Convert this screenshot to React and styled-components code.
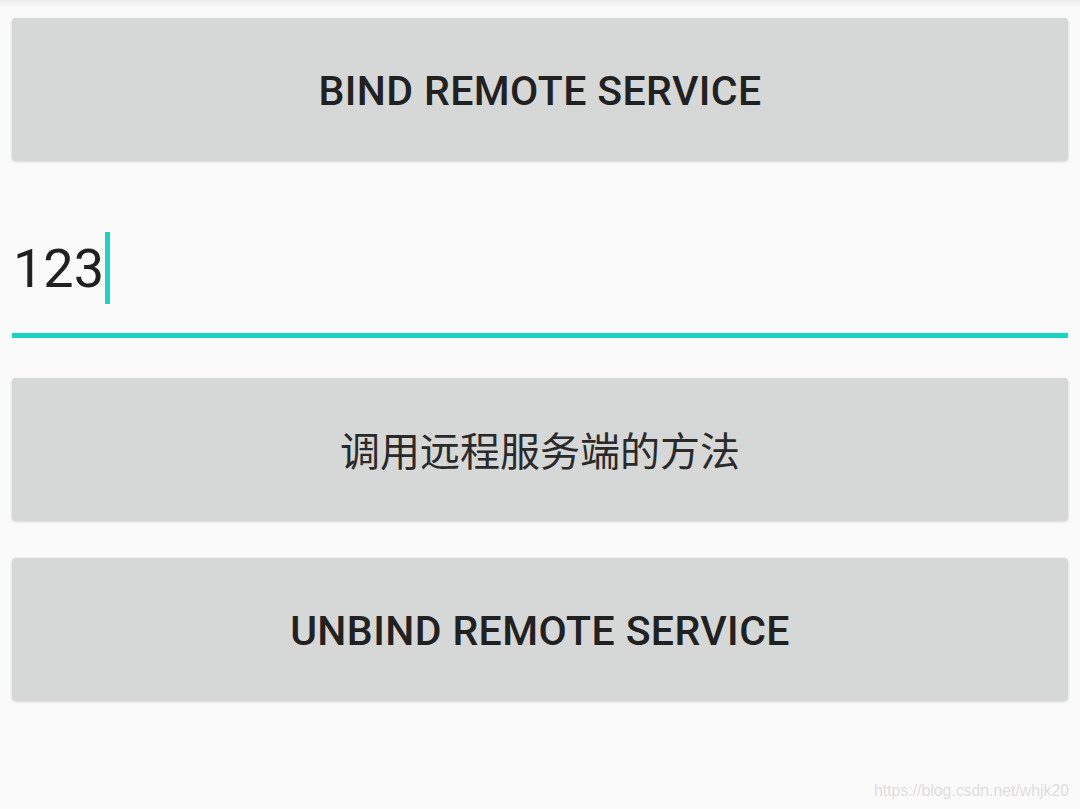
import React from 'react';
import styled, { createGlobalStyle } from 'styled-components';

const GlobalStyle = createGlobalStyle`
  html, body {
    margin: 0;
    padding: 0;
    background: #fafafa;
  }
  body {
    font-family: Roboto, "Noto Sans CJK SC", sans-serif;
  }
`;

const Screen = styled.div`
  position: relative;
  width: 1080px;
  height: 809px;
  overflow: hidden;
  background: #fafafa;
  box-sizing: border-box;
  padding: 18px 12px 0;
  display: flex;
  flex-direction: column;
`;

const TopShade = styled.div`
  position: absolute;
  top: 0;
  left: 0;
  right: 0;
  height: 7px;
  background: linear-gradient(to bottom, rgba(0, 0, 0, 0.06), rgba(0, 0, 0, 0));
`;

const Button = styled.button`
  display: flex;
  align-items: center;
  justify-content: center;
  height: 142px;
  width: 100%;
  margin-top: ${(p) => p.$gap}px;
  border: none;
  border-radius: 4px;
  background: #d6d7d7;
  box-shadow: 0 2px 3px rgba(0, 0, 0, 0.14), 0 0 2px rgba(0, 0, 0, 0.08);
  color: ${(p) => (p.$cjk ? '#2a2a2a' : '#212121')};
  font-family: Roboto, "Noto Sans CJK SC", sans-serif;
  font-size: ${(p) => (p.$cjk ? '40px' : '41px')};
  font-weight: ${(p) => (p.$cjk ? 400 : 500)};
  letter-spacing: ${(p) => (p.$cjk ? '0' : '0.4px')};
  padding: ${(p) => (p.$cjk ? '0' : '3px 0 0')};
`;

const Field = styled.div`
  height: 178px;
  display: flex;
  flex-direction: column;
  justify-content: flex-end;
`;

const FieldValue = styled.div`
  display: flex;
  align-items: center;
  height: 72px;
  margin-bottom: 29px;
  padding-left: 1px;
  font-family: Roboto, sans-serif;
  font-size: 54px;
  color: #212121;
`;

const Cursor = styled.span`
  display: inline-block;
  width: 5px;
  height: 72px;
  margin-left: 1px;
  background: #19d3c5;
`;

const Underline = styled.div`
  height: 5px;
  background: #19d3c5;
`;

const Watermark = styled.div`
  position: absolute;
  right: 11px;
  bottom: 9px;
  font-family: "Liberation Sans", Arial, sans-serif;
  font-size: 15.8px;
  color: #dedede;
`;

export default function App() {
  return (
    <>
      <GlobalStyle />
      <Screen>
        <TopShade />
        <Button $gap={0}>BIND REMOTE SERVICE</Button>
        <Field>
          <FieldValue>
            123
            <Cursor />
          </FieldValue>
          <Underline />
        </Field>
        <Button $gap={40} $cjk>调用远程服务端的方法</Button>
        <Button $gap={38}>UNBIND REMOTE SERVICE</Button>
        <Watermark>https://blog.csdn.net/whjk20</Watermark>
      </Screen>
    </>
  );
}
